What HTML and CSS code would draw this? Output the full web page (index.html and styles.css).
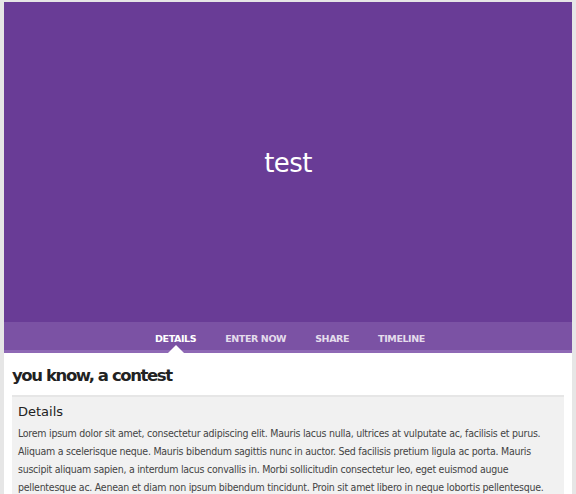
FILE: index.html
```html
<!DOCTYPE html>
<html lang="en">
<head>
  <meta charset="UTF-8">
  <title>you know, a contest</title>
  <link rel="stylesheet" href="styles.css">
</head>
<body>
  <div class="page">
    <header class="hero">
      <h1 class="hero-title">test</h1>
    </header>

    <nav class="tabs">
      <a class="tab active" href="#">Details</a>
      <a class="tab" href="#">Enter Now</a>
      <a class="tab" href="#">Share</a>
      <a class="tab" href="#">Timeline</a>
    </nav>

    <main class="content">
      <h2 class="contest-title">you know, a contest</h2>
      <section class="details">
        <h3>Details</h3>
        <p>Lorem ipsum dolor sit amet, consectetur adipiscing elit. Mauris lacus nulla, ultrices at vulputate ac, facilisis et purus.<br>
        Aliquam a scelerisque neque. Mauris bibendum sagittis nunc in auctor. Sed facilisis pretium ligula ac porta. Mauris<br>
        suscipit aliquam sapien, a interdum lacus convallis in. Morbi sollicitudin consectetur leo, eget euismod augue<br>
        pellentesque ac. Aenean et diam non ipsum bibendum tincidunt. Proin sit amet libero in neque lobortis pellentesque.</p>
      </section>
    </main>
  </div>
</body>
</html>
```

FILE: styles.css
```css
/* contest page */
:root {
  --purple: #693c96;
  --purple-light: #7b52a4;
  --text: #444;
}

* {
  margin: 0;
  padding: 0;
  box-sizing: border-box;
}

body {
  background-color: #e6e6e6;
  font-family: 'DejaVu Sans', Verdana, sans-serif;
  color: var(--text);
}

.page {
  margin: 2px 4px 0;
  background-color: #fff;
  min-height: 492px;
}

.hero {
  height: 320px;
  background-color: var(--purple);
  display: flex;
  align-items: center;
  justify-content: center;
}

.hero-title {
  color: #fff;
  font-weight: normal;
  font-size: 26px;
  letter-spacing: -0.6px;
  margin-top: 1px;
}

.tabs {
  height: 31px;
  background-color: var(--purple-light);
  border-bottom: 3px solid #8e68b5;
  display: flex;
  justify-content: center;
  gap: 29px;
  padding-left: 4px;
}

.tab {
  position: relative;
  color: #e4dcec;
  text-decoration: none;
  text-transform: uppercase;
  font-size: 9.5px;
  font-weight: bold;
  letter-spacing: -0.4px;
  line-height: 33px;
}

.tab.active {
  color: #fff;
}

.tab.active::after {
  content: '';
  position: absolute;
  left: 50%;
  bottom: -3px;
  margin-left: -8px;
  border: 8px solid transparent;
  border-top: 0;
  border-bottom: 8px solid #fff;
}

.content {
  padding: 13px 8px 0;
}

.contest-title {
  font-size: 16.5px;
  font-weight: bold;
  letter-spacing: -1.4px;
  color: #222;
  margin-bottom: 10px;
}

.details {
  background-color: #f1f1f1;
  border-top: 2px solid #e6e6e6;
  padding: 7px 6px 8px;
}

.details h3 {
  font-size: 13px;
  font-weight: normal;
  color: #222;
  margin-bottom: 5px;
}

.details p {
  font-family: 'DejaVu Sans Condensed', 'DejaVu Sans', sans-serif;
  font-size: 10.5px;
  letter-spacing: -0.25px;
  line-height: 18px;
  white-space: nowrap;
  color: var(--text);
}
```
